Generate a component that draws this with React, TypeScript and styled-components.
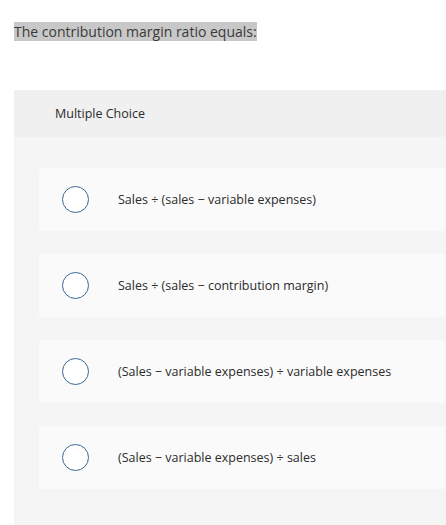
import React from 'react';
import styled, { createGlobalStyle } from 'styled-components';

const GlobalStyle = createGlobalStyle`
  html, body {
    margin: 0;
    padding: 0;
    background: #ffffff;
    overflow: hidden;
  }
  body {
    font-family: "Open Sans", "Liberation Sans", sans-serif;
    color: #333333;
  }
`;

const Page = styled.div`
  width: 446px;
  height: 525px;
  overflow: hidden;
  padding: 22px 0 0 14px;
  box-sizing: border-box;
`;

const Prompt = styled.p`
  margin: 0;
  font-size: 14px;
  line-height: 20px;

  span {
    background: #c8c8c8;
    color: #3a3a3a;
  }
`;

const Panel = styled.section`
  margin-top: 48px;
  width: 480px;
  background: #f5f5f5;
`;

const PanelHeader = styled.div`
  height: 47px;
  display: flex;
  align-items: center;
  padding-left: 41px;
  background: #f0f0f0;
  font-size: 12.5px;
  color: #2b2b2b;
`;

const Choices = styled.div`
  display: flex;
  flex-direction: column;
  gap: 23px;
  padding: 31px 0 40px 25px;
`;

const Choice = styled.label`
  height: 63px;
  display: flex;
  align-items: center;
  gap: 29px;
  padding-left: 23px;
  background: #fafafa;
  border-radius: 2px;
  font-size: 12.5px;
  color: #2b2b2b;
  cursor: pointer;
`;

const Radio = styled.span`
  width: 27px;
  height: 27px;
  box-sizing: border-box;
  border-radius: 50%;
  border: 1.5px solid #3b6794;
  background: #ffffff;
  flex-shrink: 0;
`;

const options = [
  'Sales ÷ (sales − variable expenses)',
  'Sales ÷ (sales − contribution margin)',
  '(Sales − variable expenses) ÷ variable expenses',
  '(Sales − variable expenses) ÷ sales',
];

const App = () => {
  return (
    <Page>
      <GlobalStyle />
      <Prompt>
        <span>The contribution margin ratio equals:</span>
      </Prompt>

      <Panel>
        <PanelHeader>Multiple Choice</PanelHeader>
        <Choices>
          {options.map((text) => (
            <Choice key={text}>
              <Radio />
              {text}
            </Choice>
          ))}
        </Choices>
      </Panel>
    </Page>
  );
};

export default App;
